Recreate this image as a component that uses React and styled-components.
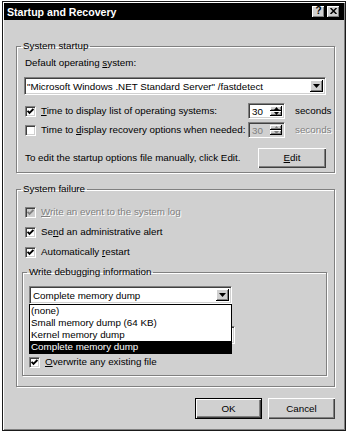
import React from 'react'
import styled, { createGlobalStyle, css } from 'styled-components'

const face = '#d0d0d0'
const shade = '#808080'
const dark = '#404040'

const GlobalStyle = createGlobalStyle`
  html, body { margin: 0; padding: 0; background: #fff; }
  body {
    font-family: "Liberation Sans", Arial, sans-serif;
    font-size: 9.8px;
    line-height: 12px;
    color: #000;
  }
  * { box-sizing: border-box; }
`

const Window = styled.div`
  margin: 1px 0 0 2px;
  width: 344px;
  height: 430px;
  background: ${face};
  border: 1px solid #1a1a1a;
  box-shadow: inset 1px 1px 0 #fff, inset -1px -1px 0 ${shade};
  padding: 1px;
  display: flex;
  flex-direction: column;
`

const TitleBar = styled.div`
  height: 17px;
  background: #000;
  display: flex;
  align-items: center;
  padding: 0 4px 0 3px;
`

const Title = styled.span`
  flex: 1;
  color: #fff;
  font-weight: bold;
  font-size: 10.6px;
`

const CaptionButtons = styled.div`
  display: flex;
  gap: 2px;
`

const CaptionButton = styled.div`
  width: 13px;
  height: 12px;
  background: ${face};
  box-shadow: inset -1px -1px 0 #000, inset 1px 1px 0 #fff, inset -2px -2px 0 ${shade};
  display: flex;
  align-items: center;
  justify-content: center;
  font-weight: bold;
  font-size: 10px;
  line-height: 10px;
  padding-bottom: 1px;
`

const Body = styled.div`
  flex: 1;
  display: flex;
  flex-direction: column;
  padding: 20px 9px 0 12px;
`

const Group = styled.fieldset`
  margin: ${p => p.$mt || 0}px ${p => p.$mr || 0}px 0 ${p => p.$ml || 0}px;
  padding: 0 ${p => p.$pr ?? 8}px ${p => p.$pb || 0}px ${p => p.$pl ?? 8}px;
  border: 1px solid ${shade};
  box-shadow: 1px 1px 0 #fff, inset 1px 1px 0 #fff;
  min-width: 0;
`

const Legend = styled.legend`
  padding: 0 2px;
  margin-left: ${p => p.$ml ?? -4}px;
  height: 12px;
  line-height: 12px;
`

const Stack = styled.div`
  display: flex;
  flex-direction: column;
  padding-top: ${p => p.$pt || 0}px;
`

const Text = styled.div`
  height: 12px;
  white-space: nowrap;
  ${p => p.$grow && css`flex: 1;`}
`

const Spacer = styled.div`
  height: ${p => p.$h}px;
  flex: none;
`

const Key = styled.span`
  text-decoration: underline;
  text-underline-offset: 1px;
`

const Row = styled.div`
  display: flex;
  align-items: center;
  height: ${p => p.$h || 16}px;
  margin-top: ${p => p.$mt || 0}px;
`

const CheckLabel = styled.span`
  flex: 1;
  margin-left: 5px;
  white-space: nowrap;
  ${p => p.$disabled && css`
    color: ${shade};
    text-shadow: 1px 1px 0 #fff;
  `}
`

const Box = styled.span`
  flex: none;
  width: 11px;
  height: 11px;
  background: ${p => (p.$disabled ? face : '#fff')};
  border: 1px solid;
  border-color: ${shade} #fff #fff ${shade};
  box-shadow: inset 1px 1px 0 ${dark}, inset -1px -1px 0 ${face};
  display: flex;
  align-items: center;
  justify-content: center;
`

const Field = styled.div`
  flex: none;
  display: flex;
  align-items: stretch;
  width: ${p => (p.$w ? `${p.$w}px` : 'auto')};
  height: ${p => p.$h || 18}px;
  margin-top: ${p => p.$mt || 0}px;
  margin-left: ${p => p.$ml || 0}px;
  background: ${p => (p.$disabled ? face : '#fff')};
  color: ${p => (p.$disabled ? shade : '#000')};
  border: 1px solid;
  border-color: ${shade} #fff #fff ${shade};
  box-shadow: inset 1px 1px 0 ${dark}, inset -1px -1px 0 ${face};
  padding: 2px;
`

const FieldText = styled.span`
  flex: 1;
  padding-left: ${p => p.$pl || 0}px;
  white-space: nowrap;
  overflow: hidden;
  line-height: ${p => p.$lh || 14}px;
`

const Raised = styled.div`
  background: ${face};
  box-shadow: inset -1px -1px 0 #000, inset 1px 1px 0 #fff, inset -2px -2px 0 ${shade};
  display: flex;
  align-items: center;
  justify-content: center;
`

const DropButton = styled(Raised)`
  width: 13px;
`

const SpinButtons = styled.div`
  width: 12px;
  display: flex;
  flex-direction: column;
`

const SpinHalf = styled(Raised)`
  flex: 1;
`

const Seconds = styled.span`
  width: 31px;
  margin-left: 10px;
  white-space: nowrap;
  ${p => p.$disabled && css`
    color: ${shade};
    text-shadow: 1px 1px 0 #fff;
  `}
`

const PushButton = styled.div`
  flex: none;
  width: ${p => p.$w}px;
  height: ${p => p.$h}px;
  background: ${face};
  display: flex;
  align-items: center;
  justify-content: center;
  box-shadow: inset 1px 1px 0 #fff, inset -1px -1px 0 ${dark}, inset -2px -2px 0 ${shade};
  ${p => p.$default && css`border: 1px solid #000;`}
`

const ComboWrap = styled.div`
  position: relative;
  width: 203px;
`

const DropList = styled.ul`
  position: absolute;
  top: 100%;
  left: 0;
  right: 0;
  z-index: 2;
  margin: 0;
  padding: 0;
  list-style: none;
  background: #fff;
  border: 1px solid #000;
`

const Option = styled.li`
  height: 12px;
  line-height: 12px;
  padding-left: 1px;
  white-space: nowrap;
  ${p => p.$selected && css`
    background: #000;
    color: #fff;
  `}
`

const Footer = styled.div`
  display: flex;
  justify-content: flex-end;
  gap: 6px;
  margin-top: 11px;
`

const Check = ({ on, disabled }) => (
  <Box $disabled={disabled}>
    {on && (
      <svg width="7" height="7" viewBox="0 0 7 7">
        <path d="M0.6 2.8 L2.5 4.8 L6.4 0.9" fill="none" stroke={disabled ? shade : '#000'} strokeWidth="1.9" />
      </svg>
    )}
  </Box>
)

const Arrow = ({ up, color = '#000', w = 7, h = 4 }) => (
  <svg width={w} height={h} viewBox="0 0 7 4">
    <path d={up ? 'M0 4 L3.5 0 L7 4 Z' : 'M0 0 L7 0 L3.5 4 Z'} fill={color} />
  </svg>
)

const Spin = ({ value, disabled }) => (
  <Field $w={37} $h={16} $disabled={disabled}>
    <FieldText $pl={1} $lh={12}>{value}</FieldText>
    <SpinButtons>
      <SpinHalf><Arrow up w={5} h={3} color={disabled ? shade : '#000'} /></SpinHalf>
      <SpinHalf><Arrow w={5} h={3} color={disabled ? shade : '#000'} /></SpinHalf>
    </SpinButtons>
  </Field>
)

const options = ['(none)', 'Small memory dump (64 KB)', 'Kernel memory dump', 'Complete memory dump']

export default function App() {
  return (
    <>
      <GlobalStyle />
      <Window>
        <TitleBar>
          <Title>Startup and Recovery</Title>
          <CaptionButtons>
            <CaptionButton>?</CaptionButton>
            <CaptionButton>
              <svg width="7" height="6" viewBox="0 0 7 6">
                <path d="M0.5 0 L6.5 6 M6.5 0 L0.5 6" stroke="#000" strokeWidth="1.5" />
              </svg>
            </CaptionButton>
          </CaptionButtons>
        </TitleBar>

        <Body>
          <Group $pb={4}>
            <Legend>System startup</Legend>
            <Stack $pt={5}>
              <Text>Default operating <Key>s</Key>ystem:</Text>
              <Field $mt={8} $ml={-1}>
                <FieldText>"Microsoft Windows .NET Standard Server" /fastdetect</FieldText>
                <DropButton><Arrow /></DropButton>
              </Field>
              <Row $mt={8}>
                <Check on />
                <CheckLabel><Key>T</Key>ime to display list of operating systems:</CheckLabel>
                <Spin value="30" />
                <Seconds>seconds</Seconds>
              </Row>
              <Row $mt={3}>
                <Check />
                <CheckLabel>Time to <Key>d</Key>isplay recovery options when needed:</CheckLabel>
                <Spin value="30" disabled />
                <Seconds $disabled>seconds</Seconds>
              </Row>
              <Row $mt={10} $h={20}>
                <Text $grow>To edit the startup options file manually, click Edit.</Text>
                <PushButton $w={68} $h={20}><span><Key>E</Key>dit</span></PushButton>
              </Row>
            </Stack>
          </Group>

          <Group $mt={10} $pb={10}>
            <Legend>System failure</Legend>
            <Stack $pt={9}>
              <Row>
                <Check on disabled />
                <CheckLabel $disabled><Key>W</Key>rite an event to the system log</CheckLabel>
              </Row>
              <Row $mt={4}>
                <Check on />
                <CheckLabel>Se<Key>n</Key>d an administrative alert</CheckLabel>
              </Row>
              <Row $mt={4}>
                <Check on />
                <CheckLabel>Automatically <Key>r</Key>estart</CheckLabel>
              </Row>

              <Group $mt={6} $ml={-3} $mr={-1} $pl={6} $pb={5}>
                <Legend $ml={-2}>Write debugging information</Legend>
                <Stack $pt={8}>
                  <ComboWrap>
                    <Field>
                      <FieldText $pl={1}>Complete memory dump</FieldText>
                      <DropButton><Arrow /></DropButton>
                    </Field>
                    <DropList>
                      {options.map(o => (
                        <Option key={o} $selected={o === 'Complete memory dump'}>{o}</Option>
                      ))}
                    </DropList>
                  </ComboWrap>
                  <Spacer $h={22} />
                  <Field $w={206} />
                  <Row $mt={10}>
                    <Check on />
                    <CheckLabel><Key>O</Key>verwrite any existing file</CheckLabel>
                  </Row>
                </Stack>
              </Group>
            </Stack>
          </Group>

          <Footer>
            <PushButton $w={67} $h={21} $default>OK</PushButton>
            <PushButton $w={67} $h={21}>Cancel</PushButton>
          </Footer>
        </Body>
      </Window>
    </>
  )
}
